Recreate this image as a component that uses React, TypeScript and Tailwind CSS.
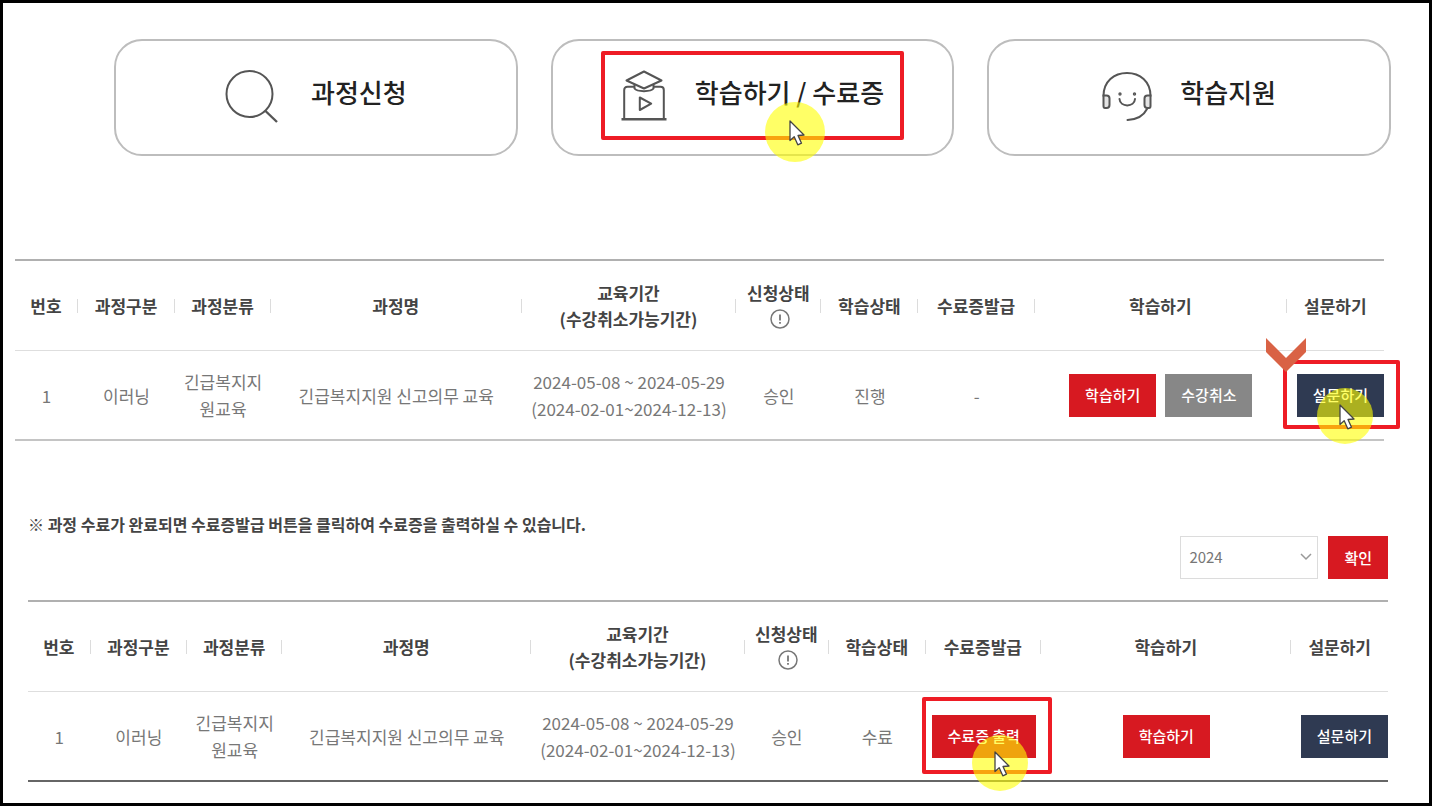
import type { ReactNode } from "react";

function SearchIcon() {
  return (
    <svg width="54" height="54" viewBox="0 0 54 54" fill="none" stroke="#555" strokeWidth="2" aria-hidden="true">
      <circle cx="24.5" cy="25" r="23" />
      <path d="M40.5 42 52 53" strokeWidth="2.4" />
    </svg>
  );
}

function CourseIcon() {
  return (
    <svg width="46" height="52" viewBox="0 0 46 52" fill="none" stroke="#555" strokeWidth="2" strokeLinejoin="round" aria-hidden="true">
      <path d="M23 1.5 40.500 10.500 23 18.500 5.500 10.500Z" />
      <path d="M13.500 14.500V18.500C16 22 30 22 32.500 18.500V14.500" />
      <path d="M13.500 16.800H6.500Q3.200 16.800 3.200 20V48M32.500 16.800H39.500Q42.800 16.800 42.800 20V48" />
      <path d="M0.500 49.300H45.500" strokeWidth="2.600" />
      <path d="M18.800 27.500V40L30.200 33.700Z" />
    </svg>
  );
}

function SupportIcon() {
  return (
    <svg width="50" height="50" viewBox="0 0 50 50" fill="none" stroke="#555" strokeWidth="2" strokeLinecap="round" aria-hidden="true">
      <path d="M1.500 25C1.500 10.500 12 2 25 2S48.500 10.500 48.500 25" />
      <path d="M1.500 24.500H4.500Q7.500 24.500 7.500 27.500V34Q7.500 37 4.500 37H3Q1.500 37 1.500 35Z" fill="#e4e4e4" />
      <path d="M48.500 24.500H45.500Q42.500 24.500 42.500 27.500V34Q42.500 37 45.500 37H47Q48.500 37 48.500 35Z" fill="#e4e4e4" />
      <path d="M45 38C42 44 35 48.500 25.500 49" />
      <path d="M17.500 28C18 36.500 32.500 36.500 33 28" />
      <circle cx="18" cy="23" r="0.700" />
      <circle cx="32.500" cy="23" r="0.700" />
    </svg>
  );
}

function InfoIcon() {
  return (
    <svg width="20" height="20" viewBox="0 0 20 20" fill="none" stroke="#777" strokeWidth="1.500" aria-hidden="true">
      <circle cx="10" cy="10" r="9" />
      <path d="M10 5.500V11.500M10 13V14.700" strokeWidth="1.800" />
    </svg>
  );
}

function Pointer({ className }: { className: string }) {
  return (
    <span className={`pointer-events-none absolute z-20 flex items-center justify-center rounded-full bg-[#ffff00]/60 ${className}`}>
      <svg width="16" height="26" viewBox="0 0 16 26" className="ml-1 mt-0.5" aria-hidden="true">
        <path d="M1 1V20.500L5.200 16.800 8.800 24.800 12.500 23.200 9 15.500 15 15Z" fill="#fff" stroke="#444" strokeWidth="1.300" strokeLinejoin="round" />
      </svg>
    </span>
  );
}

function Frame({ className }: { className: string }) {
  return <span className={`pointer-events-none absolute z-10 rounded-xs border-4 border-[#ee1c25] ${className}`} />;
}

function MenuCard({ icon, label, gap, children }: { icon: ReactNode; label: string; gap: string; children?: ReactNode }) {
  return (
    <a href="#" className={`relative flex h-[117px] items-center justify-center rounded-[28px] border-2 border-[#bdbdbd] ${gap}`}>
      <span className="shrink-0 pb-1">{icon}</span>
      <span className="whitespace-nowrap pb-3 text-[26px] leading-8 font-medium text-[#222]">{label}</span>
      {children}
    </a>
  );
}

const tones = {
  red: "bg-[#d71921]",
  gray: "bg-[#878787]",
  navy: "bg-[#2f3a52]",
};

function ActionButton({ tone, children }: { tone: keyof typeof tones; children: ReactNode }) {
  return (
    <button type="button" className={`h-[43px] whitespace-nowrap px-4 text-[15px] leading-5 font-medium text-white ${tones[tone]}`}>
      {children}
    </button>
  );
}

const columns: { label: ReactNode; width: string }[] = [
  { label: "번호", width: "w-[4.6%]" },
  { label: "과정구분", width: "w-[7.1%]" },
  { label: "과정분류", width: "w-[7%]" },
  { label: "과정명", width: "w-[18.3%]" },
  { label: <>교육기간<br />(수강취소가능기간)</>, width: "w-[15.7%]" },
  {
    label: (
      <>
        신청상태
        <span className="flex h-[26px] items-center justify-center pl-1"><InfoIcon /></span>
      </>
    ),
    width: "w-[6.2%]",
  },
  { label: "학습상태", width: "w-[7.1%]" },
  { label: "수료증발급", width: "w-[8.5%]" },
  { label: "학습하기", width: "w-[18.4%]" },
  { label: "설문하기", width: "w-[7.1%]" },
];

interface CourseTableProps {
  status: string;
  certificate: ReactNode;
  study: ReactNode;
  survey: ReactNode;
  className: string;
}

function CourseTable({ status, certificate, study, survey, className }: CourseTableProps) {
  const cells: ReactNode[] = [
    "1",
    "이러닝",
    "긴급복지지원교육",
    "긴급복지지원 신고의무 교육",
    <>2024-05-08 ~ 2024-05-29<br />(2024-02-01~2024-12-13)</>,
    "승인",
    status,
    certificate,
    study,
  ];
  return (
    <div className={`border-y-2 border-t-[#b0b0b0] ${className}`}>
      <table className="w-full table-fixed border-separate border-spacing-0 text-center text-[17px]">
        <thead>
          <tr>
            {columns.map((column, index) => (
              <th key={index} scope="col" className={`h-[90px] border-b border-[#dedede] p-0 leading-[26px] font-bold text-[#444] ${column.width}`}>
                <div className="flex items-center">
                  <div className="flex-1 whitespace-nowrap">{column.label}</div>
                  {index < columns.length - 1 && <span className="h-3.5 w-px bg-[#dcdcdc]" />}
                </div>
              </th>
            ))}
          </tr>
        </thead>
        <tbody>
          <tr>
            {cells.map((cell, index) => (
              <td key={index} className="h-[88px] px-1.5 py-0 leading-[27px] text-[#777]">{cell}</td>
            ))}
            <td className="p-0 text-right">{survey}</td>
          </tr>
        </tbody>
      </table>
    </div>
  );
}

export default function App() {
  return (
    <div className="min-h-screen border-3 border-black bg-white pb-5 font-['Noto_Sans_CJK_KR',sans-serif]">
      <nav className="mr-[38px] ml-[111px] grid grid-cols-3 gap-[33px] pt-9">
        <MenuCard icon={<SearchIcon />} label="과정신청" gap="gap-8" />
        <MenuCard icon={<CourseIcon />} label="학습하기 / 수료증" gap="gap-7">
          <Frame className="inset-x-12 top-2.5 bottom-3.5" />
          <Pointer className="top-[61px] left-[212px] size-[60px]" />
        </MenuCard>
        <MenuCard icon={<SupportIcon />} label="학습지원" gap="gap-7" />
      </nav>

      <main>
        <section className="mt-[103px] mr-[45px] ml-3">
          <CourseTable
            className="border-b-[#c4c4c4]"
            status="진행"
            certificate="-"
            study={
              <div className="flex justify-center gap-[9px]">
                <ActionButton tone="red">학습하기</ActionButton>
                <ActionButton tone="gray">수강취소</ActionButton>
              </div>
            }
            survey={
              <div className="relative inline-block align-middle">
                <ActionButton tone="navy">설문하기</ActionButton>
                <Frame className="-top-3.5 -right-4 -bottom-3 -left-3.5" />
                <svg className="absolute -top-9 -left-8 z-20" width="42" height="35" viewBox="0 0 42 35" aria-hidden="true">
                  <path d="M1 0 21 20 41 0V14L21 34 1 14Z" fill="#d96245" />
                </svg>
                <Pointer className="top-3.5 left-5 size-14" />
              </div>
            }
          />
        </section>

        <section className="mt-[71px] mr-[41px] ml-[25px]">
          <p className="text-base leading-6 font-bold text-[#444]">
            ※ 과정 수료가 완료되면 수료증발급 버튼을 클릭하여 수료증을 출력하실 수 있습니다.
          </p>
          <form className="mb-[21px] flex justify-end gap-2.5" onSubmit={(event) => event.preventDefault()}>
            <div className="relative">
              <select aria-label="연도" defaultValue="2024" className="h-[43px] w-[138px] appearance-none rounded-none border border-[#dcdcdc] bg-white px-2 text-[15px] text-[#777]">
                <option value="2024">2024</option>
              </select>
              <svg className="pointer-events-none absolute top-4 right-1.5" width="12" height="10" viewBox="0 0 12 10" fill="none" stroke="#999" strokeWidth="1.500" aria-hidden="true">
                <path d="M1 2 6 7 11 2" />
              </svg>
            </div>
            <ActionButton tone="red">확인</ActionButton>
          </form>
          <CourseTable
            className="border-b-[#666]"
            status="수료"
            certificate={
              <div className="relative inline-block align-middle">
                <ActionButton tone="red">수료증 출력</ActionButton>
                <Frame className="-top-4.5 -right-4 -bottom-4 -left-2.5" />
                <Pointer className="top-5 left-10 size-14" />
              </div>
            }
            study={<ActionButton tone="red">학습하기</ActionButton>}
            survey={<ActionButton tone="navy">설문하기</ActionButton>}
          />
        </section>
      </main>
    </div>
  );
}
